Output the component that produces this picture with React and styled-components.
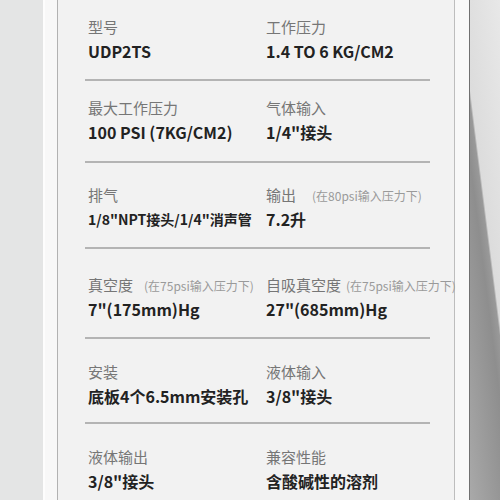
import React from "react";
import styled, { createGlobalStyle } from "styled-components";

const GlobalStyle = createGlobalStyle`
    html, body {
        margin: 0;
        padding: 0;
        background: #e4e5e5;
    }
    body {
        font-family: "Noto Sans CJK SC", "Noto Sans", sans-serif;
    }
`;

const specs = [
    {
        top: 17,
        h: 81,
        cells: [
            { label: "型号", value: "UDP2TS" },
            { label: "工作压力", value: "1.4 TO 6 KG/CM2" },
        ],
    },
    {
        top: 17,
        h: 82,
        cells: [
            { label: "最大工作压力", value: "100 PSI (7KG/CM2)" },
            { label: "气体输入", value: "1/4\"接头" },
        ],
    },
    {
        top: 22,
        h: 86,
        cells: [
            { label: "排气", value: "1/8\"NPT接头/1/4\"消声管", small: true },
            { label: "输出", note: "(在80psi输入压力下)", gap: 16, value: "7.2升" },
        ],
    },
    {
        top: 26,
        h: 90,
        cells: [
            { label: "真空度", note: "(在75psi输入压力下)", gap: 11, value: "7\"(175mm)Hg" },
            { label: "自吸真空度", note: "(在75psi输入压力下)", gap: 5, value: "27\"(685mm)Hg" },
        ],
    },
    {
        top: 23,
        h: 85,
        cells: [
            { label: "安装", value: "底板4个6.5mm安装孔" },
            { label: "液体输入", value: "3/8\"接头" },
        ],
    },
    {
        top: 23,
        h: 80,
        last: true,
        cells: [
            { label: "液体输出", value: "3/8\"接头" },
            { label: "兼容性能", value: "含酸碱性的溶剂" },
        ],
    },
];

export default function App() {
    return (
        <>
            <GlobalStyle />
            <Page>
                <Side />
                <Frame>
                    <Sheet>
                        {specs.map((row, i) => (
                            <Row key={i} $top={row.top} $h={row.h} $last={row.last}>
                                {row.cells.map((c, j) => (
                                    <Cell key={j}>
                                        <LabelLine>
                                            <Label>{c.label}</Label>
                                            {c.note && <Note $gap={c.gap}>{c.note}</Note>}
                                        </LabelLine>
                                        <Value $small={c.small}>{c.value}</Value>
                                    </Cell>
                                ))}
                            </Row>
                        ))}
                    </Sheet>
                </Frame>
                <Shadow />
            </Page>
        </>
    );
}

const Page = styled.div`
    display: flex;
    width: 500px;
    height: 500px;
    overflow: hidden;
`;

const Side = styled.div`
    width: 43px;
    flex: none;
    background: #e4e5e5;
`;

const Frame = styled.div`
    display: flex;
    flex: none;
    background: #f8f8f8;
    border-left: 2px solid #fdfdfd;
    border-right: 1px solid #707070;
    padding: 0 14px 0 12px;
`;

const Sheet = styled.div`
    width: 396px;
    background: #f2f2f2;
    border-left: 1px solid #b2b2b2;
    border-right: 1px solid #bdbdbd;
    padding-left: 27px;
    box-sizing: border-box;
    width: 398px;
`;

const Row = styled.div`
    display: grid;
    grid-template-columns: 178px 1fr;
    width: 345px;
    height: ${(p) => p.$h}px;
    box-sizing: border-box;
    padding-top: ${(p) => p.$top}px;
    border-bottom: ${(p) => (p.$last ? "none" : "2px solid #b4b4b4")};
`;

const Cell = styled.div`
    padding-left: 3px;
    white-space: nowrap;
`;

const LabelLine = styled.div`
    display: flex;
    align-items: baseline;
    height: 20px;
`;

const Label = styled.span`
    font-size: 15px;
    line-height: 20px;
    color: #767676;
`;

const Note = styled.span`
    margin-left: ${(p) => p.$gap}px;
    font-size: 12px;
    line-height: 20px;
    color: #9a9a9a;
`;

const Value = styled.div`
    margin-top: 2px;
    font-size: ${(p) => (p.$small ? 14 : 16)}px;
    line-height: 24px;
    font-weight: 700;
    color: #222;
`;

const Shadow = styled.div`
    flex: 1;
    background: linear-gradient(
        82.8deg,
        #a9a9a9 0%,
        #8e8e8e 46%,
        #999 54%,
        #dcdcdc 56%,
        #e8e8e8 100%
    );
`;
